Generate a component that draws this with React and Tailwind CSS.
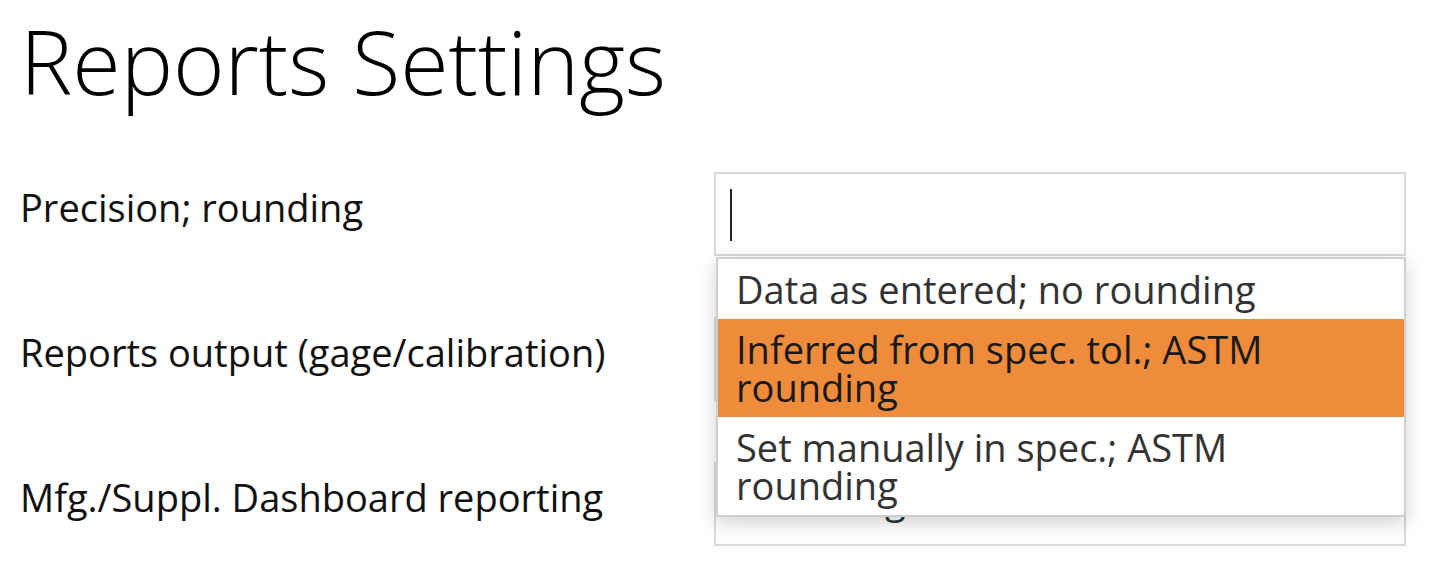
export default function App() {
  const rows = [
    { label: "Precision; rounding", value: "" },
    { label: "Reports output (gage/calibration)", value: "" },
    { label: "Mfg./Suppl. Dashboard reporting", value: "Rounding" },
  ];
  return (
    <div className="w-[1452px] h-[574px] bg-white overflow-hidden font-['Open_Sans',sans-serif] pl-[20px]">
      <h1 className="text-[88px] font-light leading-none text-black pt-[17px]">Reports Settings</h1>
      <div className="mt-[67px] flex flex-col gap-[61px]">
        {rows.map((r, i) => (
          <div key={i} className="flex items-start">
            <div className="w-[694px] text-[38px] leading-[48px] text-[#111] pt-[11px]">{r.label}</div>
            <div className="relative w-[692px] h-[84px] border-2 border-[#d9d9d9] bg-white">
              {i === 0 && <div className="absolute left-[14px] top-[15px] w-[2px] h-[52px] bg-[#222]"></div>}
              {r.value && <div className="pl-[20px] text-[38px] leading-[70px] text-[#333]">{r.value}</div>}
              {i === 0 && (
                <div className="absolute left-0 top-[83px] w-[690px] z-10 border-2 border-[#cfcfcf] bg-white shadow-[0_6px_18px_rgba(0,0,0,0.18)] text-[38px] leading-[38px] text-[#333]">
                  <div className="px-[18px] py-[11px]">Data as entered; no rounding</div>
                  <div className="px-[18px] py-[11px] bg-[#ef8c3c] text-[#1a1a1a]">Inferred from spec. tol.; ASTM<br />rounding</div>
                  <div className="px-[18px] py-[11px]">Set manually in spec.; ASTM<br />rounding</div>
                </div>
              )}
            </div>
          </div>
        ))}
      </div>
    </div>
  );
}
